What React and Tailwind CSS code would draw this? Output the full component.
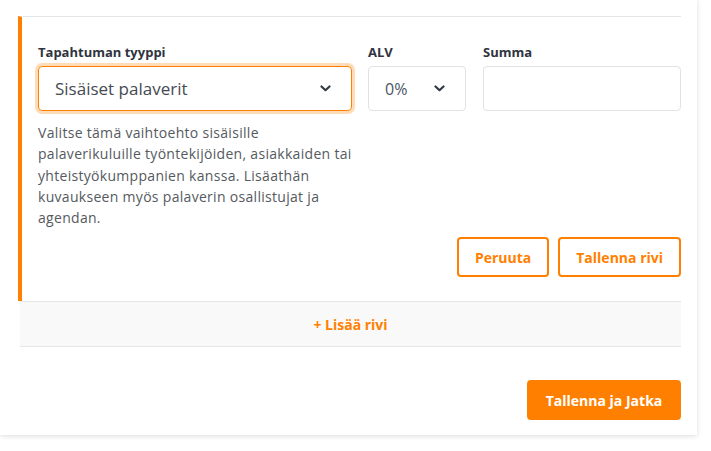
import React from 'react';

function Chevron() {
  return (
    <svg width="11" height="7" viewBox="0 0 11 7" fill="none" className="shrink-0">
      <path d="M1.5 1.5 L5.5 5.2 L9.5 1.5" stroke="#333a44" strokeWidth="2.2" strokeLinecap="round" strokeLinejoin="round" />
    </svg>
  );
}

export default function App() {
  return (
    <div className="min-h-screen bg-white font-['Open_Sans',sans-serif]">
      <div className="w-[697px] bg-white pt-4 pb-[15px] pl-[18px] pr-4 shadow-[0_1px_5px_rgba(0,0,0,0.14)]">
        {/* editable row */}
        <section className="border-l-4 border-t border-l-[#ff8000] border-t-[#e6e6e6] pl-4 pt-[27px] pb-6">
          <div className="flex">
            <div className="w-[314px]">
              <label className="block text-[13px] leading-4 font-bold text-[#2f3440] mb-[6px]">
                Tapahtuman tyyppi
              </label>
              <div className="h-[45px] flex items-center justify-between rounded border border-[#ff8000] ring-[3px] ring-[#ffdcb8] pl-4 pr-5">
                <span className="text-[17px] text-[#454a52]">Sisäiset palaverit</span>
                <Chevron />
              </div>
            </div>
            <div className="w-[98px] ml-4">
              <label className="block text-[13px] leading-4 font-bold text-[#2f3440] mb-[6px]">ALV</label>
              <div className="h-[45px] flex items-center justify-between rounded border border-[#e2e2e2] pl-4 pr-5">
                <span className="text-[16px] text-[#4b5566]">0%</span>
                <Chevron />
              </div>
            </div>
            <div className="w-[198px] ml-[17px]">
              <label className="block text-[13px] leading-4 font-bold text-[#2f3440] mb-[6px]">Summa</label>
              <div className="h-[45px] rounded border border-[#e2e2e2]"></div>
            </div>
          </div>
          <p className="w-[320px] mt-[11px] text-[14px] tracking-[0.3px] leading-[21.3px] text-[#555a60]">
            Valitse tämä vaihtoehto sisäisille palaverikuluille työntekijöiden, asiakkaiden tai yhteistyökumppanien kanssa. Lisäathän kuvaukseen myös palaverin osallistujat ja agendan.
          </p>
          <div className="flex justify-end gap-[9px] mt-[9px]">
            <button className="h-10 px-4 rounded border-2 border-[#ff8000] text-[14px] font-bold text-[#ff8000]">
              Peruuta
            </button>
            <button className="h-10 px-4 rounded border-2 border-[#ff8000] text-[14px] font-bold text-[#ff8000]">
              Tallenna rivi
            </button>
          </div>
        </section>
        <div className="ml-[2px] h-[46px] flex items-center justify-center bg-[#f9f9f9] border-y border-[#e6e6e6] text-[14px] font-bold text-[#ff8000]">
          + Lisää rivi
        </div>
        <div className="flex justify-end mt-[33px]">
          <button className="h-10 w-[154px] rounded bg-[#ff8000] text-[14px] font-bold text-white">
            Tallenna ja Jatka
          </button>
        </div>
      </div>
    </div>
  );
}
